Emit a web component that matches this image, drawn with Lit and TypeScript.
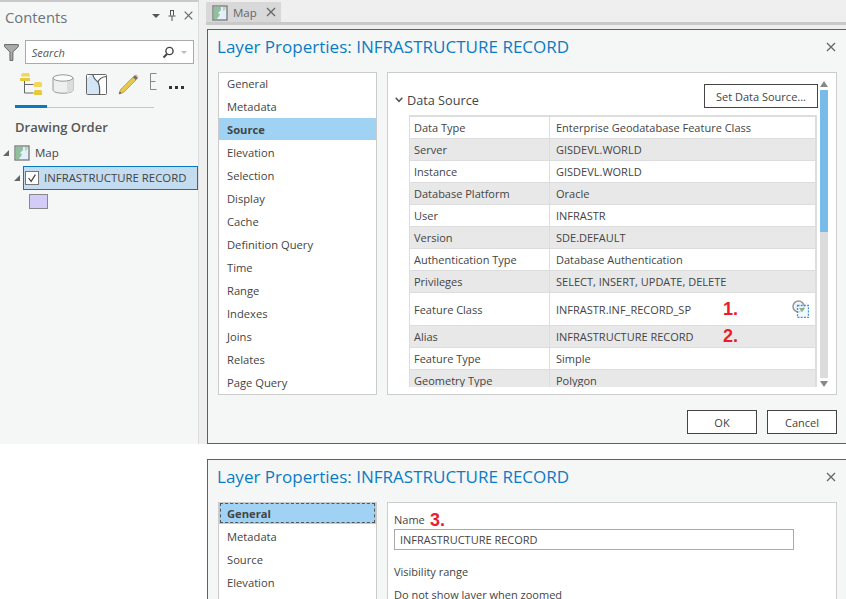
import { LitElement, html, css, svg } from "lit";
import { customElement } from "lit/decorators.js";

const NAV = ["General","Metadata","Source","Elevation","Selection","Display","Cache","Definition Query","Time","Range","Indexes","Joins","Relates","Page Query"];
const ROWS: [string,string][] = [
  ["Data Type","Enterprise Geodatabase Feature Class"],
  ["Server","GISDEVL.WORLD"],
  ["Instance","GISDEVL.WORLD"],
  ["Database Platform","Oracle"],
  ["User","INFRASTR"],
  ["Version","SDE.DEFAULT"],
  ["Authentication Type","Database Authentication"],
  ["Privileges","SELECT, INSERT, UPDATE, DELETE"],
  ["Feature Class","INFRASTR.INF_RECORD_SP"],
  ["Alias","INFRASTRUCTURE RECORD"],
  ["Feature Type","Simple"],
  ["Geometry Type","Polygon"],
];

const closeIcon = svg`<svg class="x" width="10" height="10" viewBox="0 0 10 10"><path d="M1 1l8 8M9 1L1 9" stroke="#666" stroke-width="1.3" fill="none"/></svg>`;
const paneClose = svg`<svg width="9" height="9" viewBox="0 0 9 9"><path d="M.7.7l7.600 7.600M8.300.7L.7 8.300" stroke="#666" stroke-width="1.200" fill="none"/></svg>`;
const mapIcon = svg`<svg width="16" height="16" viewBox="0 0 16 16"><rect x="1" y="1" width="14" height="14" fill="#e2f0f9" stroke="#777" stroke-width="1.300"/><path d="M2 2h7v3L6 8l2 1.500L5 14H2z" fill="#92bf9c"/><path d="M11 2h3l-1 3-2 1z" fill="#b4d4ba"/></svg>`;

@customElement("app-root")
export class AppRoot extends LitElement {
  static styles = css`
    :host { display:block; width:846px; height:599px; overflow:hidden; background:#fff;
      font-family:"Open Sans","Noto Sans",sans-serif; font-size:11px; color:#444; }
    * { box-sizing:border-box; }
    .top { display:flex; height:444px; background:#efefef; }
    .pane { width:199px; flex:none; background:#f5f7f7; border-top:2px solid #c9c9c9; border-right:1px solid #dcdcdc; display:flex; flex-direction:column; }
    .pane-head { display:flex; align-items:center; height:29px; padding:0 5px 0 5px; }
    .pane-title { font-size:14.8px; color:#6b7378; flex:1; }
    .pane-tools { display:flex; align-items:center; gap:8px; margin-top:-2px; }
    .tri { width:0; height:0; border-left:4px solid transparent; border-right:4px solid transparent; border-top:4px solid #555; }
    .search-row { display:flex; align-items:center; gap:6px; padding:9px 4px 0 4px; }
    .search { width:171px; height:24px; background:#fff; border:1px solid #aaa; display:flex; align-items:center; padding:0 6px; font-style:italic; color:#555; }
    .search span { flex:1; }
    .search .tri { border-top-color:#bbb; margin-left:6px; border-width:3px 3px 0; }
    .tool-row { display:flex; align-items:flex-start; padding:9px 0 0 20px; height:41px; }
    .tool-row svg { flex:none; }
    .tool-row .db { margin:1px 0 0 9px; }
    .tool-row .mp { margin:1px 0 0 12px; }
    .tool-row .pen { margin:1px 0 0 11px; }
    .tool-row .e { margin:0 0 0 11px; }
    .tool-row .dots { margin:13px 0 0 12px; }
    .tab-line { margin-left:15px; width:139px; height:3px; border-bottom:1px solid #c8c8c8; }
    .tab-line i { display:block; width:32px; height:3px; background:#0a79bf; }
    .order { font-size:13px; font-weight:600; color:#555; padding:10px 0 0 15px; height:35px; }
    .tree-row { display:flex; align-items:center; height:23px; }
    .arrow { width:0; height:0; border-style:solid; border-width:0 0 6px 6px; border-color:transparent transparent #666 transparent; flex:none; }
    .map-row { padding-left:3px; gap:5px; height:19px; }
    .map-row span { font-size:11.5px; }
    .layer-row { padding-left:14px; margin-top:4px; gap:3px; }
    .layer { flex:none; display:flex; align-items:center; gap:5px; width:175px; height:24px; background:#c3dcf0; border:1px solid #0a77bd; padding-left:1px; white-space:nowrap; font-size:11.4px; }
    .check { width:14px; height:14px; background:#fff; border:1px solid #777; flex:none; display:block; }
    .swatch { width:19px; height:15px; margin:5px 0 0 29px; background:#d4ccf8; border:1px solid #888; }

    .main { flex:1; min-width:0; padding-left:8px; display:flex; flex-direction:column; padding-top:2px; }
    .tabbar { height:23px; border-bottom:3px solid #c9c9c9; margin:0 0 4px -1px; flex:none; }
    .tab { width:75px; height:20px; background:#d8d8d8; display:flex; align-items:center; gap:5px; padding:1px 0 0 6px; font-size:11.5px; color:#666; }
    .tab svg.x { margin-left:4px; margin-top:-1px; }

    .dlg { background:#f5f7f7; border:1px solid #0a79bf; border-right:none; padding:0 9px 0 10px; }
    .main .dlg { flex:1; display:flex; flex-direction:column; }
    .dlg-head { display:flex; align-items:center; justify-content:space-between; height:33px; }
    .dlg-title { font-size:17.05px; color:#0a7cc4; white-space:nowrap; margin-left:-1px; }
    .dlg-head svg { margin-right:1px; }
    .body { display:flex; gap:10px; margin-top:9px; height:323px; }
    .nav { width:159px; flex:none; background:#fff; border:1px solid #ccc; overflow:hidden; font-size:11.2px; }
    .nav div { height:23px; line-height:23px; padding-left:8px; }
    .nav div:first-child { margin-top:-1px; }
    .nav .sel { background:#a0d3f3; font-weight:700; height:22px; line-height:24px; margin-bottom:1px; color:#444; }
    .nav .focus { outline:1px dashed #555; outline-offset:-2px; }
    .panel { flex:1; background:#fff; border:1px solid #ccc; display:flex; position:relative; overflow:hidden; }
    .content { flex:1; min-width:0; display:flex; flex-direction:column; padding:11px 0 0 7px; }
    .ds-head { display:flex; align-items:flex-start; height:24px; justify-content:space-between; }
    .ds-title { display:flex; align-items:center; gap:4px; font-size:12.7px; color:#444; margin-top:7px; }
    .btn { background:#fff; border:1px solid #444; height:24px; display:flex; align-items:center; justify-content:center; color:#444; }
    .set { width:114px; }
    .table { margin:7px 1px 0 14px; border-top:2px solid #ddd; border-left:1px solid #ddd; flex:none; height:272px; overflow:hidden; border-right:2px solid #ddd; }
    .tr { display:grid; grid-template-columns:139px 1fr; height:22px; border-bottom:1px solid #ddd; background:#fff; position:relative; align-items:center; }
    .tr:nth-child(even) { background:#e8e8e8; }
    .tr.tall { height:33px; }
    .tr div { padding-left:4px; white-space:nowrap; height:100%; display:flex; align-items:center; }
    .tr div + div { border-left:1px solid #ddd; padding-left:6px; }
    .note { position:absolute; font-family:"Liberation Sans",Arial,sans-serif; font-weight:700; font-size:18px; color:#ec1c2e; line-height:20px; }
    .n1 { left:313px; top:6px; }
    .n2 { left:313px; top:0; }
    .feat { position:absolute; left:382px; top:7px; }
    .scroll { width:18px; flex:none; padding:8px 8px 0 2px; display:flex; flex-direction:column; align-items:center; }
    .scroll .up { width:0;height:0;border-left:4px solid transparent;border-right:4px solid transparent;border-bottom:6px solid #888; flex:none; }
    .scroll .dn { width:0;height:0;border-left:4px solid transparent;border-right:4px solid transparent;border-top:6px solid #888; margin-top:3px; flex:none; }
    .track { width:8px; flex:none; height:288px; background:#dcdcdc; margin-top:3px; }
    .track i { display:block; height:142px; background:#78bbe8; }
    .foot { display:flex; justify-content:flex-end; gap:10px; margin-top:15px; }
    .foot .btn { width:70px; }

    .second { margin:15px 0 0 207px; height:140px; overflow:hidden; border-bottom:none; }
    .second .body { height:200px; }
    .general { padding:9px 0 0 6px; flex:1; min-width:0; }
    .name-row { display:flex; align-items:center; height:15px; position:relative; }
    .name-row .note { left:36px; top:-2px; }
    .input { width:400px; height:21px; border:1px solid #aaa; background:#fff; display:flex; align-items:center; padding-left:5px; margin-top:2px; white-space:nowrap; }
    .vis { margin-top:14px; }
    .zoomed { margin-top:8px; white-space:nowrap; }
  `;

  private navList(items: string[], selected: string, focus = false) {
    return html`<div class="nav">${items.map(n => html`<div class="${n===selected?'sel':''} ${n===selected&&focus?'focus':''}">${n}</div>`)}</div>`;
  }

  render() {
    return html`
      <div class="top">
        <div class="pane">
          <div class="pane-head">
            <div class="pane-title">Contents</div>
            <div class="pane-tools">
              <div class="tri"></div>
              <svg width="8" height="11" viewBox="0 0 8 11"><path d="M2 .5h4M2.500.5v5M5.500.5v5M.5 6h7M4 6v5" stroke="#555" fill="none"/></svg>
              ${paneClose}
            </div>
          </div>
          <div class="search-row">
            <svg width="15" height="17" viewBox="0 0 15 17"><path d="M.5.5h14v2L9 8v8.500H6V8L.5 2.500z" fill="#aaa" stroke="#666"/></svg>
            <div class="search"><span>Search</span>
              <svg width="13" height="13" viewBox="0 0 13 13"><circle cx="7.500" cy="5" r="3.600" fill="none" stroke="#444" stroke-width="1.400"/><path d="M5 8L1.500 11.500" stroke="#444" stroke-width="2"/></svg>
              <div class="tri"></div>
            </div>
          </div>
          <div class="tool-row">
            <svg width="23" height="23" viewBox="0 0 23 23"><path d="M1 3.500Q1 0 3 0h5q2 0 2 3.500z" fill="#f0d75c"/><rect x="0" y="5" width="10" height="3" fill="#e6c93f"/><path d="M4.500 8v12h9M4.500 11.500h9" stroke="#666" fill="none"/><path d="M14 14V10.500q0-1.500 1.500-1.500h5q1.500 0 1.500 1.500V14z" fill="#f0d75c"/><path d="M14 22v-3.500q0-1.500 1.500-1.500h5q1.500 0 1.500 1.500V22z" fill="#e6c93f"/></svg>
            <svg class="db" width="22" height="20" viewBox="0 0 22 20"><path d="M1 4v12c0 2 4.500 3.200 10 3.200S21 18 21 16V4z" fill="#efefef" stroke="#999"/><path d="M15 7.500q4-.7 6-2V16c0 1.300-2.500 2.500-6 3z" fill="#dcdcdc"/><ellipse cx="11" cy="4" rx="10" ry="3.200" fill="#fafafa" stroke="#999"/></svg>
            <svg class="mp" width="21" height="21" viewBox="0 0 21 21"><rect x=".5" y=".5" width="20" height="20" rx="1" fill="#d2e6f6" stroke="#666"/><path d="M7 1h13v19h-6.500c.5-5 0-9-1.500-12C9.500 6 7.500 4 7 1z" fill="#fff"/><path d="M1 1h4L1 4z" fill="#fff"/><path d="M7 1c.5 3 2.500 5 5 7 1.500 3 2 7 1.500 12.500M12 8c1-3 4-5 8-5.500" stroke="#555" stroke-width="1.200" fill="none"/></svg>
            <svg class="pen" width="21" height="21" viewBox="0 0 21 21"><path d="M1 20l1.500-4.500L15 3l3 3L5.500 18.500z" fill="#e5c84c" stroke="#a8953f" stroke-width=".7"/><path d="M15 3l2-2 3 3-2 2z" fill="#6f6f6f"/><path d="M17 1l1-.7 2.500 2.500-.5 1.200z" fill="#f0a890"/><path d="M1 20l.8-2.500 1.700 1.700z" fill="#555"/></svg>
            <svg class="e" width="7" height="17" viewBox="0 0 7 17"><path d="M6.500.5H.5v16h6M.5 8.500h5" stroke="#888" fill="none"/></svg>
            <svg class="dots" width="16" height="3" viewBox="0 0 16 3"><path d="M0 0h3v3H0zM6 0h3v3H6zM12 0h3v3h-3z" fill="#333"/></svg>
          </div>
          <div class="tab-line"><i></i></div>
          <div class="order">Drawing Order</div>
          <div class="tree-row map-row"><div class="arrow"></div>${mapIcon}<span>Map</span></div>
          <div class="tree-row layer-row"><div class="arrow"></div>
            <div class="layer">
              <svg class="check" viewBox="0 0 14 14"><path d="M3 7l3 4 5-8" stroke="#444" stroke-width="1.400" fill="none"/></svg>
              INFRASTRUCTURE RECORD
            </div>
          </div>
          <div class="swatch"></div>
        </div>
        <div class="main">
          <div class="tabbar"><div class="tab">${mapIcon}<span>Map</span>${closeIcon}</div></div>
          <div class="dlg">
            <div class="dlg-head"><div class="dlg-title">Layer Properties: INFRASTRUCTURE RECORD</div>${closeIcon}</div>
            <div class="body">
              ${this.navList(NAV, "Source")}
              <div class="panel">
                <div class="content">
                  <div class="ds-head">
                    <div class="ds-title"><svg width="8" height="6" viewBox="0 0 8 6"><path d="M.7.700L4 4.300 7.300.700" stroke="#555" stroke-width="1.500" fill="none"/></svg>Data Source</div>
                    <div class="btn set">Set Data Source...</div>
                  </div>
                  <div class="table">
                    ${ROWS.map((r,i)=>html`<div class="tr ${i===8?'tall':''}"><div>${r[0]}</div><div>${r[1]}</div>
                      ${i===8?html`<span class="note n1">1.</span>
                        <svg class="feat" width="17" height="18" viewBox="0 0 17 18"><circle cx="6.500" cy="6.500" r="5.500" fill="#f4f4f4" stroke="#999" stroke-width="1.500"/><rect x="5.500" y="5.500" width="11" height="12" fill="#eef6fb" fill-opacity=".7" stroke="#3a96dc" stroke-width="1.300" stroke-dasharray="2 1.200"/><path d="M7 8h6l-3 4z" fill="#86b08c"/></svg>`:""}
                      ${i===9?html`<span class="note n2">2.</span>`:""}
                    </div>`)}
                  </div>
                </div>
                <div class="scroll"><div class="up"></div><div class="track"><i></i></div><div class="dn"></div></div>
              </div>
            </div>
            <div class="foot"><div class="btn">OK</div><div class="btn">Cancel</div></div>
          </div>
        </div>
      </div>
      <div class="dlg second">
        <div class="dlg-head"><div class="dlg-title">Layer Properties: INFRASTRUCTURE RECORD</div>${closeIcon}</div>
        <div class="body">
          ${this.navList(NAV.slice(0, 4), "General", true)}
          <div class="panel">
            <div class="general">
              <div class="name-row">Name<span class="note">3.</span></div>
              <div class="input">INFRASTRUCTURE RECORD</div>
              <div class="vis">Visibility range</div>
              <div class="zoomed">Do not show layer when zoomed</div>
            </div>
          </div>
        </div>
      </div>
    `;
  }
}
